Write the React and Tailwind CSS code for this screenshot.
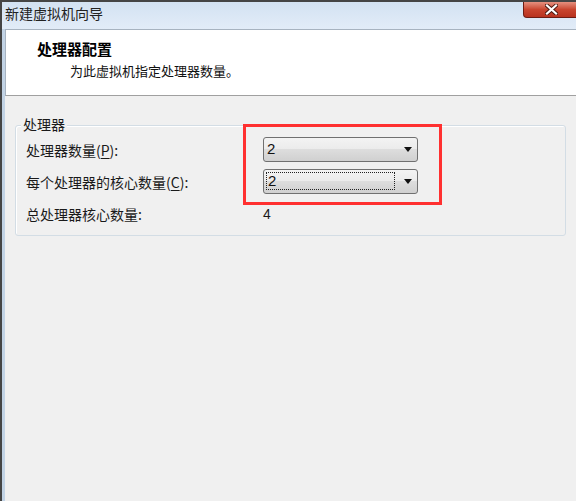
import { Fragment } from "react"

const rows = [
  { label: "处理器数量", key: "P", value: "2" },
  { label: "每个处理器的核心数量", key: "C", value: "2", focused: true },
]

function ComboBox({ value, focused }) {
  return (
    <div className="h-[25px] w-[155px] flex items-center rounded-[3px] border border-[#707070] bg-[linear-gradient(to_bottom,#f3f3f3_0%,#ebebeb_50%,#dddddd_50%,#d0d0d0_100%)]">
      <div className="flex-1 h-full p-[2px] pb-[3px]">
        <span
          className={`flex h-full items-center pl-[1px] text-[15px] text-[#111] font-['Liberation_Sans',sans-serif] ${
            focused ? "border border-dotted border-[#222] w-[129px]" : ""
          }`}
        >
          {value}
        </span>
      </div>
      <span className="mr-[5px] h-0 w-0 border-x-[4px] border-t-[5px] border-x-transparent border-t-[#111]" />
    </div>
  )
}

export default function App() {
  return (
    <div className="relative w-[576px] h-[501px] overflow-hidden flex flex-col bg-[#f0f0f0] border-t-2 border-l-2 border-[#454545] font-['Noto_Sans_CJK_SC','Noto_Sans',sans-serif] text-[#1a1a1a]">
      {/* title bar */}
      <div className="h-[27px] flex items-start justify-between bg-gradient-to-b from-[#d3e2f2] to-[#e2ecf8]">
        <span className="pl-[3px] pt-[1px] text-[14px] leading-[20px] text-[#222]">
          新建虚拟机向导
        </span>
        <div className="mr-[-4px] h-[16px] w-[57px] flex items-center justify-center rounded-b-[4px] border border-t-0 border-[#6d1c13] bg-gradient-to-b from-[#e5907f] via-[#c9452f] to-[#b8321f]">
          <svg width="13" height="11" viewBox="0 0 13 11">
            <path d="M2 1.5 L11 9.5 M11 1.5 L2 9.5" stroke="#4a1810" strokeWidth="4" strokeLinecap="square" />
            <path d="M2 1.5 L11 9.5 M11 1.5 L2 9.5" stroke="#fff" strokeWidth="2.2" strokeLinecap="square" />
          </svg>
        </div>
      </div>

      <div className="flex-1 flex flex-col border-l-[3px] border-[#c2d3e5]">
        {/* header */}
        <div className="h-[67px] bg-white border-t border-l border-b border-t-[#a7b3c0] border-l-[#a7b3c0] border-b-[#a0a0a0] pl-[31px] pt-[9px]">
          <p className="text-[15px] leading-[20px] font-bold text-black">处理器配置</p>
          <p className="mt-[3px] ml-[33px] text-[13px] leading-[18px] text-[#111]">
            为此虚拟机指定处理器数量。
          </p>
        </div>

        {/* body */}
        <div className="flex-1 pt-[29px] pl-[10px]">
          <div className="relative w-[551px] h-[111px] rounded-[3px] border border-[#d3dde5] shadow-[inset_1px_1px_0_#fff]">
            <span className="absolute left-[5px] -top-[10px] px-[2px] bg-[#f0f0f0] text-[14px] leading-[16px]">
              处理器
            </span>
            <div className="grid grid-cols-[237px_155px] auto-rows-[25px] gap-y-[7px] pt-[11px] pl-[10px] text-[14px] leading-[16px]">
              {rows.map((row) => (
                <Fragment key={row.key}>
                  <div className="flex items-center">
                    {row.label}(<span className="underline underline-offset-2">{row.key}</span>):
                  </div>
                  <ComboBox value={row.value} focused={row.focused} />
                </Fragment>
              ))}
              <div className="flex items-center">总处理器核心数量:</div>
              <div className="flex items-center font-['Liberation_Sans',sans-serif] text-[14px]">4</div>
            </div>
          </div>
        </div>
      </div>

      {/* annotation */}
      <div className="absolute left-[241px] top-[122px] w-[199px] h-[81px] border-[3px] border-[#ff3030]" />
    </div>
  )
}
